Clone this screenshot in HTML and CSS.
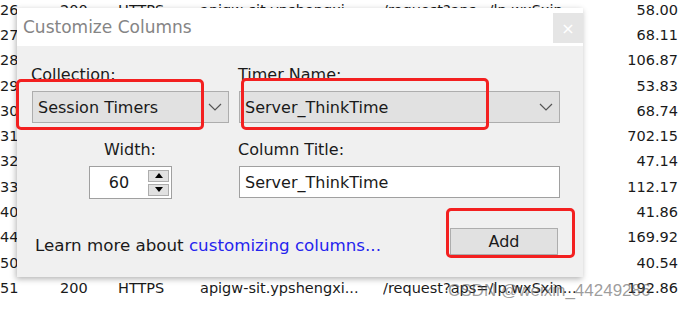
FILE: index.html
```html
<!DOCTYPE html>
<html lang="en">
  <head>
    <meta charset="UTF-8" />
    <title>Customize Columns</title>
    <link rel="stylesheet" href="styles.css">
  </head>
  <body>
    <div class="sessions">
      <div class="row"><span>26</span><span>200</span><span>HTTPS</span><span>apigw-sit.ypshengxi...</span><span>/request?aps=/lp.wxSxin...</span><span class="num">58.00</span></div>
      <div class="row"><span>27</span><span>200</span><span>HTTPS</span><span>apigw-sit.ypshengxi...</span><span>/request?aps=/lp.wxSxin...</span><span class="num">68.11</span></div>
      <div class="row"><span>28</span><span>200</span><span>HTTPS</span><span>apigw-sit.ypshengxi...</span><span>/request?aps=/lp.wxSxin...</span><span class="num">106.87</span></div>
      <div class="row"><span>29</span><span>200</span><span>HTTPS</span><span>apigw-sit.ypshengxi...</span><span>/request?aps=/lp.wxSxin...</span><span class="num">53.83</span></div>
      <div class="row"><span>30</span><span>200</span><span>HTTPS</span><span>apigw-sit.ypshengxi...</span><span>/request?aps=/lp.wxSxin...</span><span class="num">68.74</span></div>
      <div class="row"><span>31</span><span>200</span><span>HTTPS</span><span>apigw-sit.ypshengxi...</span><span>/request?aps=/lp.wxSxin...</span><span class="num">702.15</span></div>
      <div class="row"><span>32</span><span>200</span><span>HTTPS</span><span>apigw-sit.ypshengxi...</span><span>/request?aps=/lp.wxSxin...</span><span class="num">47.14</span></div>
      <div class="row"><span>33</span><span>200</span><span>HTTPS</span><span>apigw-sit.ypshengxi...</span><span>/request?aps=/lp.wxSxin...</span><span class="num">112.17</span></div>
      <div class="row"><span>40</span><span>200</span><span>HTTPS</span><span>apigw-sit.ypshengxi...</span><span>/request?aps=/lp.wxSxin...</span><span class="num">41.86</span></div>
      <div class="row"><span>44</span><span>200</span><span>HTTPS</span><span>apigw-sit.ypshengxi...</span><span>/request?aps=/lp.wxSxin...</span><span class="num">169.92</span></div>
      <div class="row"><span>50</span><span>200</span><span>HTTPS</span><span>apigw-sit.ypshengxi...</span><span>/request?aps=/lp.wxSxin...</span><span class="num">40.54</span></div>
      <div class="row"><span>51</span><span>200</span><span>HTTPS</span><span>apigw-sit.ypshengxi...</span><span>/request?aps=/lp.wxSxin...</span><span class="num">192.86</span></div>
    </div>

    <div class="watermark">CSDN @weixin_44249286</div>

    <div class="dialog">
      <div class="dialog-title">
        <span>Customize Columns</span>
        <span class="close">&times;</span>
      </div>

      <div class="dialog-body">
        <div class="field">
          <label>Collection:</label>
          <div class="select">
            <span>Session Timers</span>
            <svg width="14" height="8" viewBox="0 0 14 8"><path d="M1 1l6 6 6-6" fill="none" stroke="#555" stroke-width="1.2"/></svg>
          </div>
        </div>

        <div class="field">
          <label>Timer Name:</label>
          <div class="select">
            <span>Server_ThinkTime</span>
            <svg width="14" height="8" viewBox="0 0 14 8"><path d="M1 1l6 6 6-6" fill="none" stroke="#555" stroke-width="1.2"/></svg>
          </div>
        </div>

        <div class="field field-center">
          <label>Width:</label>
          <div class="spinner">
            <span class="spinner-value">60</span>
            <div class="spinner-buttons">
              <span class="spin"><svg width="8" height="5" viewBox="0 0 8 5"><path d="M0 5L4 0L8 5Z" fill="#000"/></svg></span>
              <span class="spin"><svg width="8" height="5" viewBox="0 0 8 5"><path d="M0 0L4 5L8 0Z" fill="#000"/></svg></span>
            </div>
          </div>
        </div>

        <div class="field">
          <label>Column Title:</label>
          <div class="textbox">Server_ThinkTime</div>
        </div>

        <div class="dialog-footer">
          <p>Learn more about <a>customizing columns...</a></p>
          <span class="btn">Add</span>
        </div>
      </div>

      <span class="mark mark-collection"></span>
      <span class="mark mark-timer"></span>
      <span class="mark mark-add"></span>
    </div>
  </body>
</html>
```

FILE: styles.css
```css
body {
  margin: 0px;
  background: #fff;
  color: #1a1a1a;
  font-family: "DejaVu Sans", Verdana, sans-serif;
  overflow: hidden;
}

.sessions {
  margin-top: -3px;
  padding-right: 17px;
}

.row {
  height: 25.3px;
  display: grid;
  grid-template-columns: 60px 58px 82px 183px 1fr 80px;
  align-items: center;
  font-size: 14.5px;
  white-space: nowrap;

  > span {
    overflow: hidden;
  }

  > .num {
    text-align: right;
  }
}

.watermark {
  position: absolute;
  left: 448px;
  top: 281px;
  font-family: "Liberation Sans", Arial, sans-serif;
  font-size: 17px;
  color: rgba(90, 90, 90, 0.6);
  white-space: nowrap;
}

.dialog {
  position: absolute;
  left: 17px;
  top: 8px;
  width: 566px;
  height: 269px;
  background: #f0f0f0;
  box-shadow: -1px 2px 6px rgba(0, 0, 0, 0.3);
  display: flex;
  flex-direction: column;
}

.dialog-title {
  height: 38px;
  background: #fff;
  display: flex;
  align-items: center;
  justify-content: space-between;
  padding-left: 6px;
  font-size: 17px;
  color: #858585;
}

.close {
  width: 30px;
  height: 30px;
  margin-top: 2px;
  background: #e5e5e5;
  color: #fff;
  font-size: 16px;
  display: flex;
  align-items: center;
  justify-content: center;
}

.dialog-body {
  flex: 1;
  padding: 19px 23px 0px 15px;
  display: grid;
  grid-template-columns: 197px 321px;
  column-gap: 10px;
  row-gap: 17px;
  align-content: start;
  font-size: 16px;
}

.field {
  display: flex;
  flex-direction: column;
  gap: 6px;

  > label {
    height: 20px;
    line-height: 20px;
    margin-left: -1px;
  }
}

.field-center {
  align-items: center;
}

.select {
  height: 32px;
  box-sizing: border-box;
  border: 1px solid #adadad;
  background: #e1e1e1;
  display: flex;
  align-items: center;
  justify-content: space-between;
  padding: 0px 6px 0px 5px;
}

.spinner {
  width: 83px;
  height: 33px;
  box-sizing: border-box;
  border: 1px solid #a0a0a0;
  background: #fff;
  display: flex;
  align-items: center;
  padding-right: 2px;
}

.spinner-value {
  flex: 1;
  text-align: center;
}

.spinner-buttons {
  width: 21px;
  display: flex;
  flex-direction: column;
  gap: 2px;
}

.spin {
  height: 12px;
  box-sizing: border-box;
  border: 1px solid #adadad;
  background: #e1e1e1;
  display: flex;
  align-items: center;
  justify-content: center;
}

.textbox {
  height: 32px;
  box-sizing: border-box;
  border: 1px solid #a0a0a0;
  background: #fff;
  display: flex;
  align-items: center;
  padding-left: 5px;
}

.dialog-footer {
  grid-column: 1 / 3;
  margin-top: 11px;
  display: flex;
  align-items: center;
  justify-content: space-between;
  padding: 0px 2px 0px 3px;

  > p {
    margin: 8px 0px 0px;
    font-size: 16.7px;
  }

  a {
    color: #2424ee;
  }
}

.btn {
  width: 108px;
  height: 27px;
  box-sizing: border-box;
  border: 1px solid #adadad;
  background: #e1e1e1;
  display: flex;
  align-items: center;
  justify-content: center;
}

.mark {
  position: absolute;
  border: 3px solid #f32020;
  border-radius: 5px;
  box-sizing: border-box;
}

.mark-collection {
  left: -1px;
  top: 71px;
  width: 188px;
  height: 51px;
}

.mark-timer {
  left: 224px;
  top: 70px;
  width: 248px;
  height: 52px;
}

.mark-add {
  left: 429px;
  top: 200px;
  width: 129px;
  height: 50px;
}
```
